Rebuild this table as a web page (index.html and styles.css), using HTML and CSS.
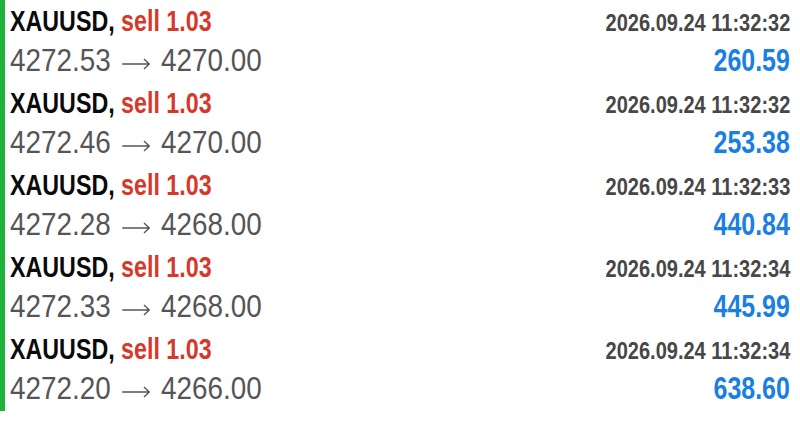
FILE: index.html
```html
<!DOCTYPE html>
<html lang="en">
<head>
    <meta charset="UTF-8">
    <title>History</title>
    <link rel="stylesheet" href="styles.css">
</head>
<body>
    <div class="deals">
        <div class="deal">
            <div class="line">
                <span class="title">XAUUSD, <span class="side">sell 1.03</span></span>
                <span class="time">2026.09.24 11:32:32</span>
            </div>
            <div class="line">
                <span class="price">4272.53<svg class="arrow" viewBox="0 0 34 14"><path d="M1 7H32M26 2l6 5-6 5"/></svg>4270.00</span>
                <span class="profit">260.59</span>
            </div>
        </div>
        <div class="deal">
            <div class="line">
                <span class="title">XAUUSD, <span class="side">sell 1.03</span></span>
                <span class="time">2026.09.24 11:32:32</span>
            </div>
            <div class="line">
                <span class="price">4272.46<svg class="arrow" viewBox="0 0 34 14"><path d="M1 7H32M26 2l6 5-6 5"/></svg>4270.00</span>
                <span class="profit">253.38</span>
            </div>
        </div>
        <div class="deal">
            <div class="line">
                <span class="title">XAUUSD, <span class="side">sell 1.03</span></span>
                <span class="time">2026.09.24 11:32:33</span>
            </div>
            <div class="line">
                <span class="price">4272.28<svg class="arrow" viewBox="0 0 34 14"><path d="M1 7H32M26 2l6 5-6 5"/></svg>4268.00</span>
                <span class="profit">440.84</span>
            </div>
        </div>
        <div class="deal">
            <div class="line">
                <span class="title">XAUUSD, <span class="side">sell 1.03</span></span>
                <span class="time">2026.09.24 11:32:34</span>
            </div>
            <div class="line">
                <span class="price">4272.33<svg class="arrow" viewBox="0 0 34 14"><path d="M1 7H32M26 2l6 5-6 5"/></svg>4268.00</span>
                <span class="profit">445.99</span>
            </div>
        </div>
        <div class="deal">
            <div class="line">
                <span class="title">XAUUSD, <span class="side">sell 1.03</span></span>
                <span class="time">2026.09.24 11:32:34</span>
            </div>
            <div class="line">
                <span class="price">4272.20<svg class="arrow" viewBox="0 0 34 14"><path d="M1 7H32M26 2l6 5-6 5"/></svg>4266.00</span>
                <span class="profit">638.60</span>
            </div>
        </div>
    </div>
</body>
</html>
```

FILE: styles.css
```css
body {
    margin: 0;
    background-color: #fff;
    font-family: "Liberation Sans", Arial, sans-serif;
}
.deals {
    border-left: 5px solid #1db33a;
    padding: 0 10px 0 5px;
    height: 411px;
}
.deal {
    height: 82px;
    padding-top: 4px;
    box-sizing: border-box;
}
.line {
    display: flex;
    justify-content: space-between;
    align-items: baseline;
    white-space: nowrap;
}
.line:first-child {
    height: 38px;
}
.title {
    display: inline-block;
    font-size: 30px;
    font-weight: bold;
    color: #0a0a0a;
    transform: scaleX(0.775);
    transform-origin: left;
}
.side {
    color: #d5392c;
}
.time {
    display: inline-block;
    font-size: 23px;
    font-weight: bold;
    color: #474747;
    transform: scaleX(0.87);
    transform-origin: right;
}
.price {
    display: inline-block;
    font-size: 32px;
    color: #555;
    transform: scaleX(0.87);
    transform-origin: left;
}
.arrow {
    width: 34px;
    height: 14px;
    margin: 0 12px;
    fill: none;
    stroke: #555;
    stroke-width: 1.6;
}
.profit {
    display: inline-block;
    font-size: 32px;
    font-weight: bold;
    color: #1a7fe2;
    transform: scaleX(0.78);
    transform-origin: right;
}
```
